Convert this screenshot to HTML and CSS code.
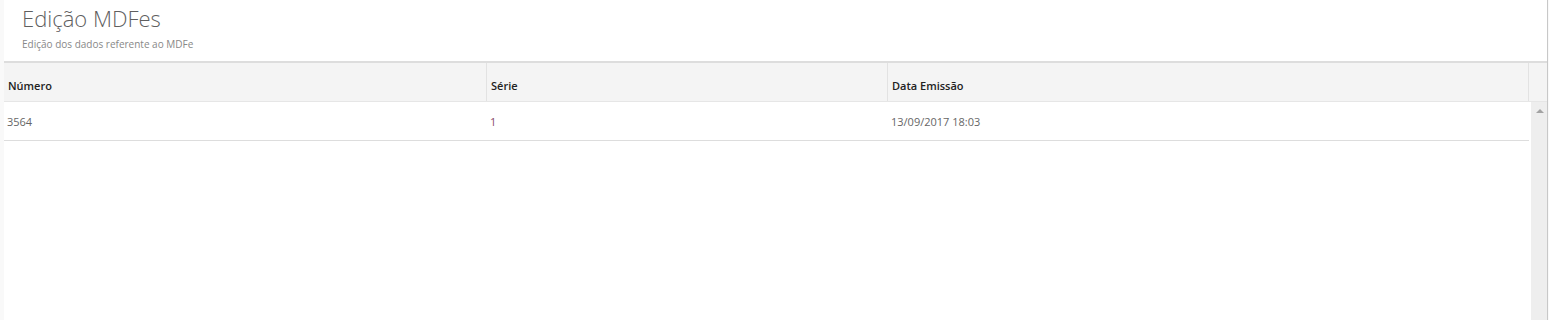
FILE: index.html
```html
<!DOCTYPE html>
<html lang="pt-BR">
<head>
    <meta charset="UTF-8">
    <title>Edição MDFes</title>
    <link rel="stylesheet" href="styles.css">
</head>
<body>
    <div class="panel">
        <div class="page-head">
            <h1>Edição MDFes</h1>
            <p>Edição dos dados referente ao MDFe</p>
        </div>

        <div class="grid">
            <div class="grid-head">
                <div class="th col-numero">Número</div>
                <div class="th col-serie">Série</div>
                <div class="th col-data">Data Emissão</div>
                <div class="th col-spacer"></div>
            </div>
            <div class="grid-body">
                <div class="rows">
                    <div class="tr">
                        <div class="td col-numero">3564</div>
                        <div class="td col-serie link">1</div>
                        <div class="td col-data">13/09/2017 18:03</div>
                    </div>
                </div>
                <div class="scrollbar">
                    <span class="arrow-up"></span>
                </div>
            </div>
        </div>
    </div>
</body>
</html>
```

FILE: styles.css
```css
:root {
    --text-color: #555;
    --head-bg: #f4f4f4;
    --border-color: #e2e2e2;
}

html, body {
    margin: 0;
    height: 100%;
}

body {
    font-family: 'Open Sans', 'Noto Sans', sans-serif;
    background: #f9f9f9;
    color: var(--text-color);
    padding-left: 4px;
    box-sizing: border-box;
}

.panel {
    width: 1543px;
    height: 100%;
    background: white;
    border-right: 1px solid #c8c8c8;
    display: flex;
    flex-direction: column;
}

.page-head {
    height: 61px;
    padding: 5px 0 0 18px;
    box-sizing: border-box;
}

.page-head h1 {
    margin: 0;
    font-size: 22px;
    font-weight: 300;
    color: #5f5f5f;
    line-height: 26px;
}

.page-head p {
    margin: 6px 0 0;
    font-size: 10px;
    color: #888;
    line-height: 14px;
}

.grid {
    flex: 1;
    display: flex;
    flex-direction: column;
    font-size: 11px;
}

.grid-head {
    display: flex;
    height: 41px;
    background: var(--head-bg);
    border-top: 2px solid #ddd;
    border-bottom: 1px solid #e6e6e6;
    box-sizing: border-box;
}

.th {
    font-weight: 600;
    color: #222;
    padding: 15px 0 0 4px;
    border-right: 1px solid var(--border-color);
    box-sizing: border-box;
}

.col-numero { width: 483px; }
.col-serie { width: 401px; }
.col-data { width: 641px; }

.th.col-spacer {
    flex: 1;
    border-right: none;
}

.grid-body {
    flex: 1;
    display: flex;
}

.rows {
    width: 1525px;
}

.tr {
    display: flex;
    height: 39px;
    border-bottom: 1px solid #ddd;
    box-sizing: border-box;
}

.td {
    padding: 12px 0 0 3px;
    color: #666;
    box-sizing: border-box;
}

.td.link {
    color: #8a4a68;
}

.scrollbar {
    flex: 1;
    margin-left: 2px;
    background: #eeeeee;
    position: relative;
}

.arrow-up {
    position: absolute;
    top: 7px;
    left: 5px;
    width: 0;
    height: 0;
    border-left: 4px solid transparent;
    border-right: 4px solid transparent;
    border-bottom: 4px solid #a3a3a3;
}
```
